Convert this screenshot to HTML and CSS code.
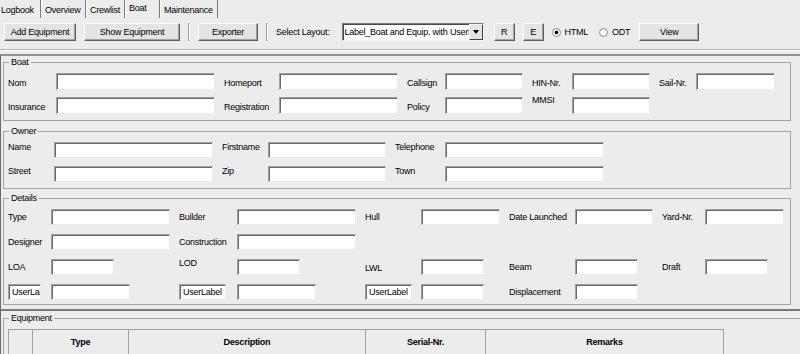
FILE: index.html
```html
<!DOCTYPE html>
<html lang="en">
    <head>
        <meta charset="UTF-8" />
        <meta name="viewport" content="width=device-width, initial-scale=1.0" />
        <title>Boat</title>
        <link rel="stylesheet" href="styles.css">
    </head>
    <body>
        <!-- 탭 -->
        <div class="tabs">
            <div class="tab t1">Logbook</div>
            <div class="tab t2">Overview</div>
            <div class="tab t3">Crewlist</div>
            <div class="tab t4 on">Boat</div>
            <div class="tab t5">Maintenance</div>
        </div>

        <!-- 툴바 -->
        <div class="toolbar">
            <button class="btn w-add">Add Equipment</button>
            <button class="btn w-show">Show Equipment</button>
            <span class="sep"></span>
            <button class="btn w-exp">Exporter</button>
            <span class="sep"></span>
            <span class="layout-lbl">Select Layout:</span>
            <div class="select">
                <span class="select-txt">Label_Boat and Equip. with UserLabel</span>
                <span class="select-arrow"><i></i></span>
            </div>
            <button class="btn w-sq w-r">R</button>
            <button class="btn w-sq">E</button>
            <label class="radio"><span class="dot on"></span>HTML</label>
            <label class="radio odt"><span class="dot"></span>ODT</label>
            <button class="btn w-view">View</button>
        </div>
        <div class="rule"></div>

        <!-- 보트정보 패널 -->
        <div class="panel">
            <fieldset class="box box-boat">
                <legend>Boat</legend>
                <div class="grid g-boat">
                    <span class="lbl">Nom</span>
                    <input class="field" type="text" />
                    <span class="lbl">Homeport</span>
                    <input class="field" type="text" />
                    <span class="lbl">Callsign</span>
                    <input class="field" type="text" />
                    <span class="lbl">HIN-Nr.</span>
                    <input class="field" type="text" />
                    <span class="lbl">Sail-Nr.</span>
                    <input class="field" type="text" />

                    <span class="lbl">Insurance</span>
                    <input class="field" type="text" />
                    <span class="lbl">Registration</span>
                    <input class="field" type="text" />
                    <span class="lbl">Policy</span>
                    <input class="field" type="text" />
                    <span class="lbl up">MMSI</span>
                    <input class="field" type="text" />
                </div>
            </fieldset>

            <fieldset class="box box-owner">
                <legend>Owner</legend>
                <div class="grid g-owner">
                    <span class="lbl">Name</span>
                    <input class="field" type="text" />
                    <span class="lbl">Firstname</span>
                    <input class="field" type="text" />
                    <span class="lbl">Telephone</span>
                    <input class="field" type="text" />

                    <span class="lbl">Street</span>
                    <input class="field" type="text" />
                    <span class="lbl">Zip</span>
                    <input class="field" type="text" />
                    <span class="lbl">Town</span>
                    <input class="field" type="text" />
                </div>
            </fieldset>

            <fieldset class="box box-details">
                <legend>Details</legend>
                <div class="grid g-details">
                    <span class="lbl">Type</span>
                    <input class="field" type="text" />
                    <span class="lbl">Builder</span>
                    <input class="field" type="text" />
                    <span class="lbl">Hull</span>
                    <input class="field" type="text" />
                    <span class="lbl">Date Launched</span>
                    <input class="field" type="text" />
                    <span class="lbl">Yard-Nr.</span>
                    <input class="field" type="text" />

                    <span class="lbl">Designer</span>
                    <input class="field" type="text" />
                    <span class="lbl">Construction</span>
                    <input class="field" type="text" />

                    <span class="lbl first">LOA</span>
                    <input class="field short" type="text" />
                    <span class="lbl top">LOD</span>
                    <input class="field short" type="text" />
                    <span class="lbl low">LWL</span>
                    <input class="field short" type="text" />
                    <span class="lbl">Beam</span>
                    <input class="field short" type="text" />
                    <span class="lbl">Draft</span>
                    <input class="field short" type="text" />

                    <input class="field user u1" type="text" value="UserLabel" />
                    <input class="field mid" type="text" />
                    <input class="field user" type="text" value="UserLabel" />
                    <input class="field mid" type="text" />
                    <input class="field user" type="text" value="UserLabel" />
                    <input class="field short" type="text" />
                    <span class="lbl">Displacement</span>
                    <input class="field short" type="text" />
                </div>
            </fieldset>
        </div>

        <!-- 장비 패널 -->
        <div class="panel panel-eq">
            <fieldset class="box box-eq">
                <legend>Equipment</legend>
                <table class="eq">
                    <tr>
                        <th class="c0"></th>
                        <th class="c1">Type</th>
                        <th class="c2">Description</th>
                        <th class="c3">Serial-Nr.</th>
                        <th class="c4">Remarks</th>
                    </tr>
                </table>
            </fieldset>
        </div>
    </body>
</html>
```

FILE: styles.css
```css
body {
    margin: 0;
    width: 800px;
    height: 354px;
    overflow: hidden;
    background: #ececec;
    color: #000;
    font-family: "Liberation Sans", Arial, sans-serif;
    font-size: 9px;
    letter-spacing: -0.25px;
}
/* 탭 */
.tabs {
    display: flex;
    height: 18px;
}
.tab {
    box-sizing: border-box;
    height: 18px;
    padding: 5px 0 0 3px;
    line-height: 11px;
    border-left: 1px solid #fff;
    border-right: 1px solid #7a7a7a;
}
.t1 {
    width: 41px;
    padding-left: 1px;
    border-left: 0;
}
.t2 {
    width: 45px;
}
.t3 {
    width: 39px;
}
.t4 {
    width: 35px;
}
.t5 {
    width: 58px;
}
.tab.on {
    padding-top: 3px;
}
/* 툴바 */
.toolbar {
    display: flex;
    align-items: center;
    gap: 8px;
    height: 18px;
    margin-top: 5px;
    padding-left: 4px;
}
.btn {
    box-sizing: border-box;
    height: 18px;
    padding: 0;
    border: 1px solid;
    border-color: #fff #5e5e5e #5e5e5e #fff;
    box-shadow: inset -1px -1px #a0a0a0;
    background: #e4e4e4;
    font: inherit;
    letter-spacing: inherit;
    color: #000;
}
.w-add {
    width: 72px;
}
.w-show {
    width: 96px;
}
.w-exp {
    width: 60px;
}
.w-sq {
    width: 21px;
}
.w-r {
    margin-left: 2px;
}
.w-view {
    width: 60px;
    margin-left: 1px;
}
.sep {
    width: 0;
    height: 18px;
    border-left: 1px solid #a0a0a0;
    border-right: 1px solid #fff;
}
.layout-lbl {
    margin-right: 4px;
}
.select {
    display: flex;
    box-sizing: border-box;
    width: 142px;
    height: 18px;
    border: 1px solid;
    border-color: #7a7a7a #f4f4f4 #f4f4f4 #7a7a7a;
    box-shadow: inset 1px 1px #4a4a4a;
    background: #fff;
}
.select-txt {
    flex: 1;
    overflow: hidden;
    white-space: nowrap;
    padding-left: 2px;
    line-height: 16px;
}
.select-arrow {
    display: flex;
    align-items: center;
    justify-content: center;
    box-sizing: border-box;
    width: 14px;
    border: 1px solid;
    border-color: #f4f4f4 #404040 #404040 #f4f4f4;
    background: #e4e4e4;
}
.select-arrow i {
    border-left: 3px solid transparent;
    border-right: 3px solid transparent;
    border-top: 4px solid #000;
}
/* 라디오 */
.radio {
    display: flex;
    align-items: center;
    gap: 4px;
}
.odt {
    margin-left: 3px;
}
.dot {
    box-sizing: border-box;
    width: 9px;
    height: 9px;
    border-radius: 50%;
    border: 1px solid #8a8a8a;
    background: #fff;
}
.dot.on {
    background: radial-gradient(circle, #000 0 1.6px, #fff 2.2px);
}
.rule {
    margin-top: 8px;
    border-top: 1px solid #b4b4b4;
    border-bottom: 1px solid #fff;
}
/* 패널 */
.panel {
    margin-top: 3px;
    padding: 0 0 4px 2px;
    border-top: 2px solid #929292;
    border-left: 1px solid #6a6a6a;
}
.box {
    box-sizing: border-box;
    width: 788px;
    margin: 1px 0 0;
    padding: 5px 4px 4px;
    border: 1px solid #a4a4a4;
}
.box legend {
    margin-left: 1px;
    padding: 0 2px;
    line-height: 11px;
}
.box-boat {
    padding-bottom: 6px;
}
.box-owner {
    margin-top: 5px;
    padding-bottom: 6px;
}
.box-details {
    margin-top: 4px;
}
/* 입력 그리드 */
.grid {
    display: grid;
    column-gap: 9px;
    align-items: center;
}
.g-boat {
    grid-template-columns: 39px 159px 46px 119px 29px 78px 31px 78px 28px 79px;
    grid-auto-rows: 17px;
    row-gap: 7px;
}
.g-boat .lbl {
    align-self: end;
    padding-bottom: 1px;
}
.g-boat .lbl.up {
    align-self: start;
    margin-top: -2px;
}
.g-owner {
    grid-template-columns: 37px 159px 37px 118px 41px 159px;
    grid-auto-rows: 16px;
    row-gap: 8px;
}
.g-owner .lbl {
    align-self: start;
}
.g-details {
    grid-template-columns: 34px 119px 49px 119px 47px 79px 57px 78px 34px 79px;
    grid-auto-rows: 16px;
    row-gap: 9px;
}
.lbl {
    white-space: nowrap;
    line-height: 11px;
}
.lbl.first {
    grid-column-start: 1;
}
.lbl.top {
    align-self: start;
    margin-top: -1px;
}
.lbl.low {
    margin-top: 2px;
}
.field {
    box-sizing: border-box;
    width: 100%;
    height: 100%;
    margin: 0;
    padding: 0 0 0 2px;
    border: 1px solid;
    border-color: #a0a0a0 #ececec #ececec #a0a0a0;
    box-shadow: inset 1px 1px #6a6a6a;
    background: #fff;
    font: inherit;
    letter-spacing: inherit;
    color: #000;
    outline: none;
}
.field.short {
    width: 63px;
}
.field.mid {
    width: 79px;
}
.field.user {
    width: 47px;
    padding-left: 3px;
}
.field.u1 {
    width: 33px;
}
/* 장비 */
.panel-eq {
    margin-top: 0;
    border-top-color: #7a7a7a;
}
.box-eq {
    width: 830px;
    margin-top: 2px;
    padding-top: 5px;
}
.eq {
    border-collapse: collapse;
}
.eq th {
    box-sizing: border-box;
    height: 25px;
    padding: 0;
    border: 1px solid #a0a0a0;
    font-weight: bold;
    text-align: center;
}
.c0 {
    width: 24px;
}
.c1 {
    width: 96px;
}
.c2 {
    width: 237px;
}
.c3 {
    width: 120px;
}
.c4 {
    width: 238px;
}
```
